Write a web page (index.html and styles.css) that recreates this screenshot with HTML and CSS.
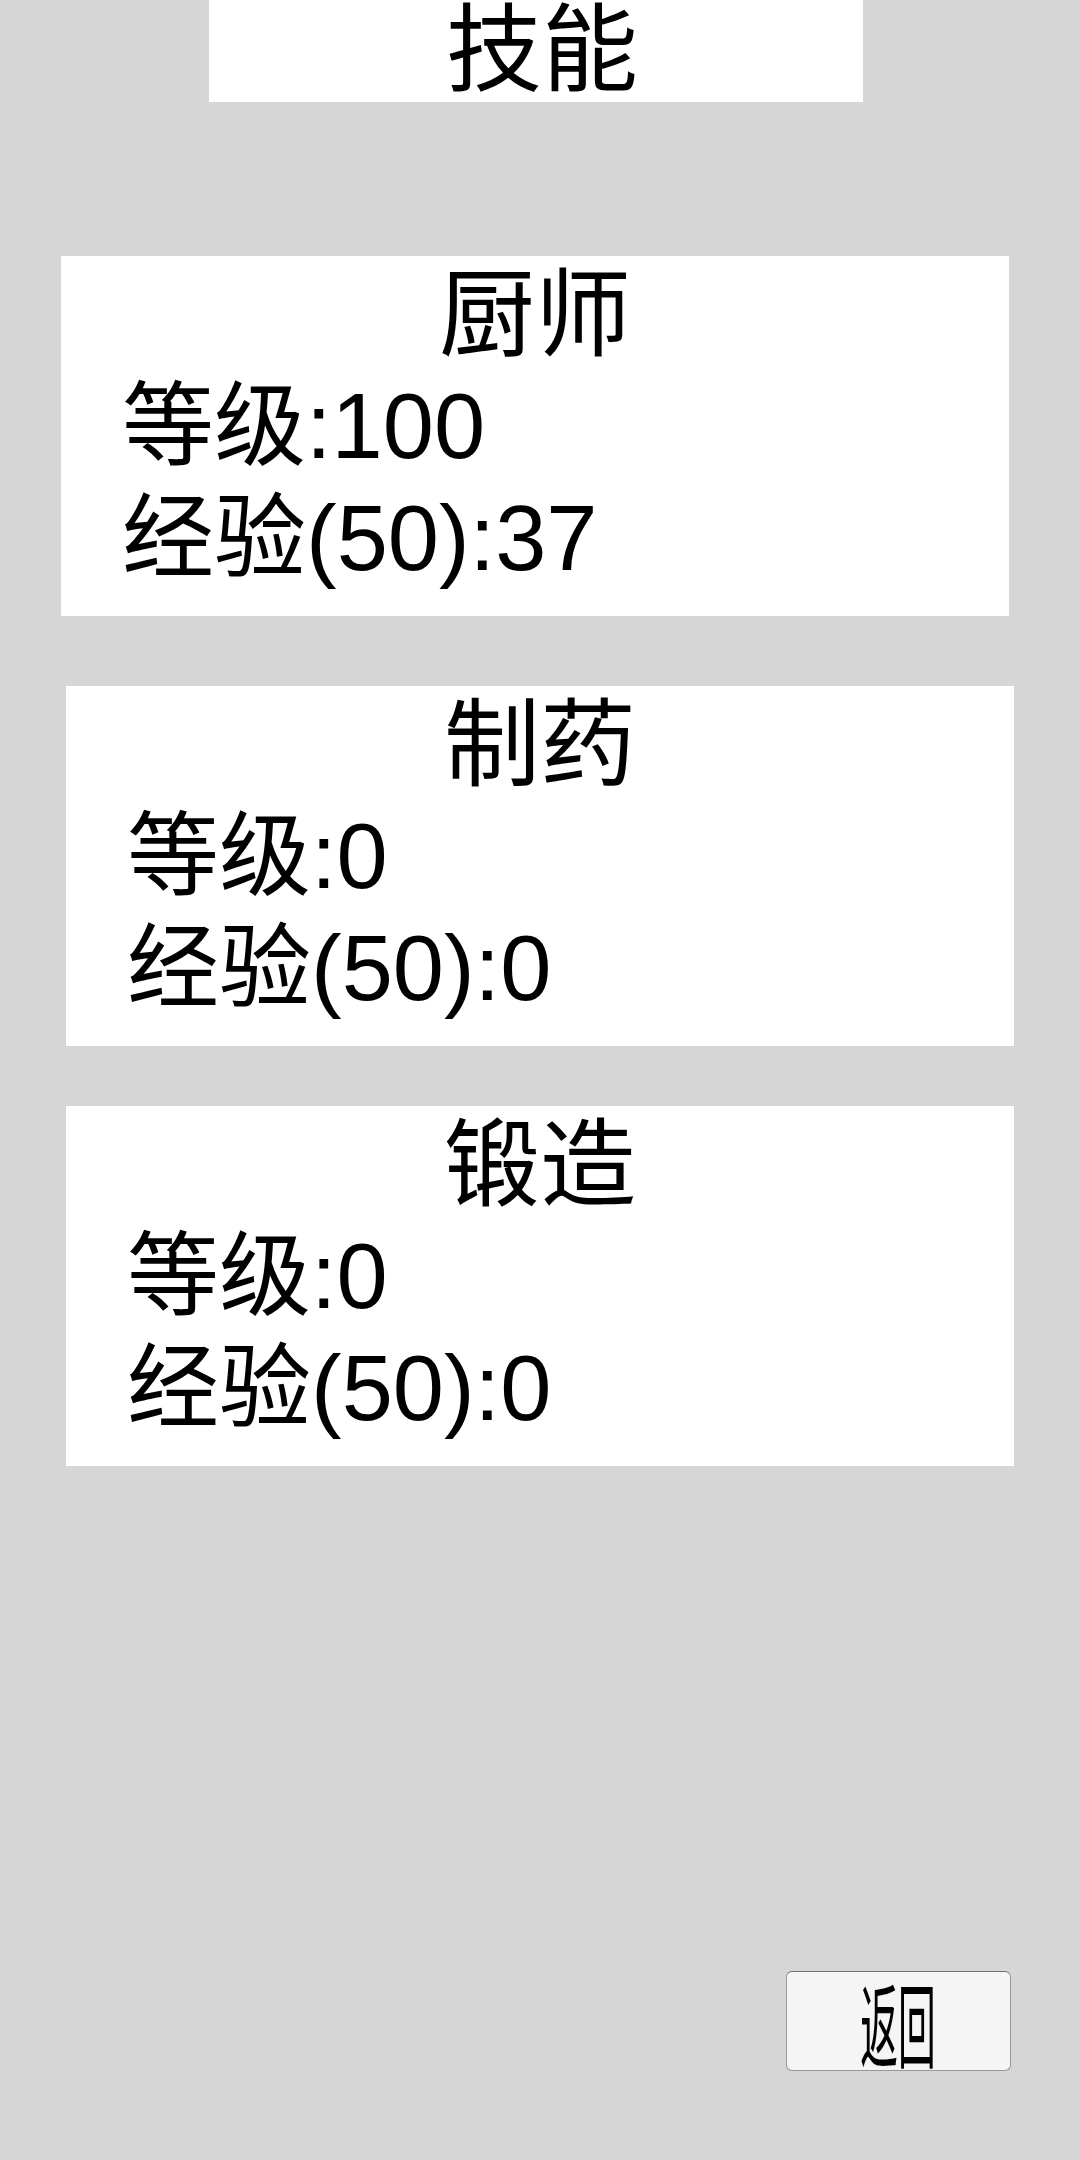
FILE: index.html
```html
<!DOCTYPE html>
<html lang="zh-CN">
<head>
    <meta charset="UTF-8">
    <title>技能</title>
    <link rel="stylesheet" href="styles.css">
</head>
<body>
    <div class="page">
        <div class="title-bar">技能</div>

        <div class="skills">
            <div class="skill" id="cook">
                <div class="skill-name">厨师</div>
                <div class="skill-stat">等级:100</div>
                <div class="skill-stat">经验(50):37</div>
            </div>
            <div class="skill">
                <div class="skill-name">制药</div>
                <div class="skill-stat">等级:0</div>
                <div class="skill-stat">经验(50):0</div>
            </div>
            <div class="skill">
                <div class="skill-name">锻造</div>
                <div class="skill-stat">等级:0</div>
                <div class="skill-stat">经验(50):0</div>
            </div>
        </div>

        <button class="back-btn" type="button"><span>返回</span></button>
    </div>
</body>
</html>
```

FILE: styles.css
```css
html, body {
    margin: 0;
    padding: 0;
}
body {
    background: #d6d6d6;
    font-family: "Liberation Sans", "Noto Sans CJK SC", sans-serif;
    color: #000;
}
.page {
    display: flex;
    flex-direction: column;
    height: 2160px;
}
.title-bar {
    margin-left: 209px;
    width: 654px;
    height: 102px;
    padding-left: 12px;
    box-sizing: border-box;
    background: #fff;
    text-align: center;
    font-size: 96px;
    line-height: 100px;
}
.skills {
    margin-top: 154px;
    display: flex;
    flex-direction: column;
}
.skill {
    width: 948px;
    height: 360px;
    margin: 0 0 60px 66px;
    padding-top: 4px;
    box-sizing: border-box;
    background: #fff;
}
#cook {
    margin-left: 61px;
    margin-bottom: 70px;
}
.skill-name {
    text-align: center;
    font-size: 96px;
    line-height: 110px;
}
.skill-stat {
    padding-left: 61px;
    font-size: 92px;
    line-height: 112px;
}
.back-btn {
    margin-top: auto;
    margin-bottom: 89px;
    margin-left: 786px;
    width: 225px;
    height: 100px;
    padding: 0;
    background: #f5f5f5;
    border: 1px solid #979797;
    border-top-color: #6f6f6f;
    border-radius: 6px;
    font-family: "Noto Sans CJK SC", sans-serif;
    font-size: 92px;
    line-height: 96px;
    color: #000;
}
.back-btn span {
    display: inline-block;
    transform: scaleX(0.41);
}
```
